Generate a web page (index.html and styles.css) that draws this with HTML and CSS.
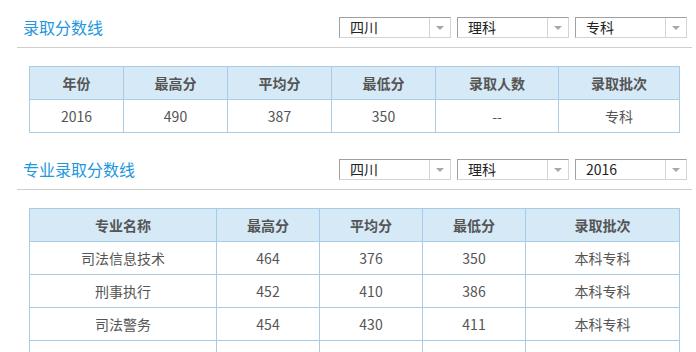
FILE: index.html
```html
<!DOCTYPE html>
<html lang="zh">
<head>
<meta charset="utf-8">
<link rel="stylesheet" href="styles.css">
</head>
<body>
<div class="wrap">
  <div class="head">
    <h2 class="title">录取分数线</h2>
    <div class="filters">
      <div class="sel"><span class="val">四川</span><span class="arr"></span></div>
      <div class="sel"><span class="val">理科</span><span class="arr"></span></div>
      <div class="sel"><span class="val">专科</span><span class="arr"></span></div>
    </div>
  </div>
  <table class="grid t1">
    <colgroup><col style="width:94px"><col style="width:104px"><col style="width:104px"><col style="width:104px"><col style="width:123px"><col style="width:121px"></colgroup>
    <thead><tr><th>年份</th><th>最高分</th><th>平均分</th><th>最低分</th><th>录取人数</th><th>录取批次</th></tr></thead>
    <tbody><tr><td>2016</td><td>490</td><td>387</td><td>350</td><td>--</td><td>专科</td></tr></tbody>
  </table>

  <div class="head second">
    <h2 class="title">专业录取分数线</h2>
    <div class="filters">
      <div class="sel"><span class="val">四川</span><span class="arr"></span></div>
      <div class="sel"><span class="val">理科</span><span class="arr"></span></div>
      <div class="sel"><span class="val">2016</span><span class="arr"></span></div>
    </div>
  </div>
  <table class="grid t2">
    <colgroup><col style="width:187px"><col style="width:103px"><col style="width:103px"><col style="width:103px"><col style="width:154px"></colgroup>
    <thead><tr><th>专业名称</th><th>最高分</th><th>平均分</th><th>最低分</th><th>录取批次</th></tr></thead>
    <tbody>
      <tr><td>司法信息技术</td><td>464</td><td>376</td><td>350</td><td>本科专科</td></tr>
      <tr><td>刑事执行</td><td>452</td><td>410</td><td>386</td><td>本科专科</td></tr>
      <tr><td>司法警务</td><td>454</td><td>430</td><td>411</td><td>本科专科</td></tr>
      <tr class="more"><td></td><td></td><td></td><td></td><td></td></tr>
    </tbody>
  </table>
</div>
</body>
</html>
```
FILE: styles.css
```css
html, body {
  margin: 0;
  padding: 0;
  background: #fff;
  font-family: "Noto Sans CJK SC", "Microsoft YaHei", sans-serif;
  color: #555;
}
.wrap {
  margin-left: 17px;
  width: 675px;
}
.head {
  display: flex;
  justify-content: space-between;
  align-items: center;
  border-bottom: 1px solid #cfcfcf;
  padding: 17px 5px 9px 6px;
}
.head.second {
  padding-top: 26px;
}
.title {
  margin: 0;
  font-size: 16px;
  font-weight: normal;
  color: #2297dc;
  line-height: 21px;
}
.filters {
  display: flex;
  gap: 6px;
}
.sel {
  box-sizing: border-box;
  width: 112px;
  height: 21px;
  display: flex;
  border-top: 1px solid #a0a0a0;
  border-left: 1px solid #a0a0a0;
  border-right: 1px solid #d4d4d4;
  border-bottom: 1px solid #d4d4d4;
  background: #fff;
}
.val {
  flex: 1;
  padding-left: 10px;
  font-size: 14px;
  line-height: 19px;
  color: #222;
}
.arr {
  width: 20px;
  border-left: 1px solid #d4d4d4;
  display: flex;
  align-items: center;
  justify-content: center;
}
.arr::after {
  content: "";
  width: 0;
  height: 0;
  border-left: 4px solid transparent;
  border-right: 4px solid transparent;
  border-top: 4px solid #a8a8a8;
}
.grid {
  border-collapse: collapse;
  table-layout: fixed;
  width: 650px;
  margin: 18px 0 0 12px;
}
.grid th, .grid td {
  border: 1px solid #a8cce6;
  height: 33px;
  padding: 0;
  text-align: center;
  box-sizing: border-box;
}
.grid th {
  background: #d6e9f7;
  font-size: 14px;
  font-weight: bold;
  color: #555;
}
.grid td {
  font-size: 14px;
  color: #555;
}
```
